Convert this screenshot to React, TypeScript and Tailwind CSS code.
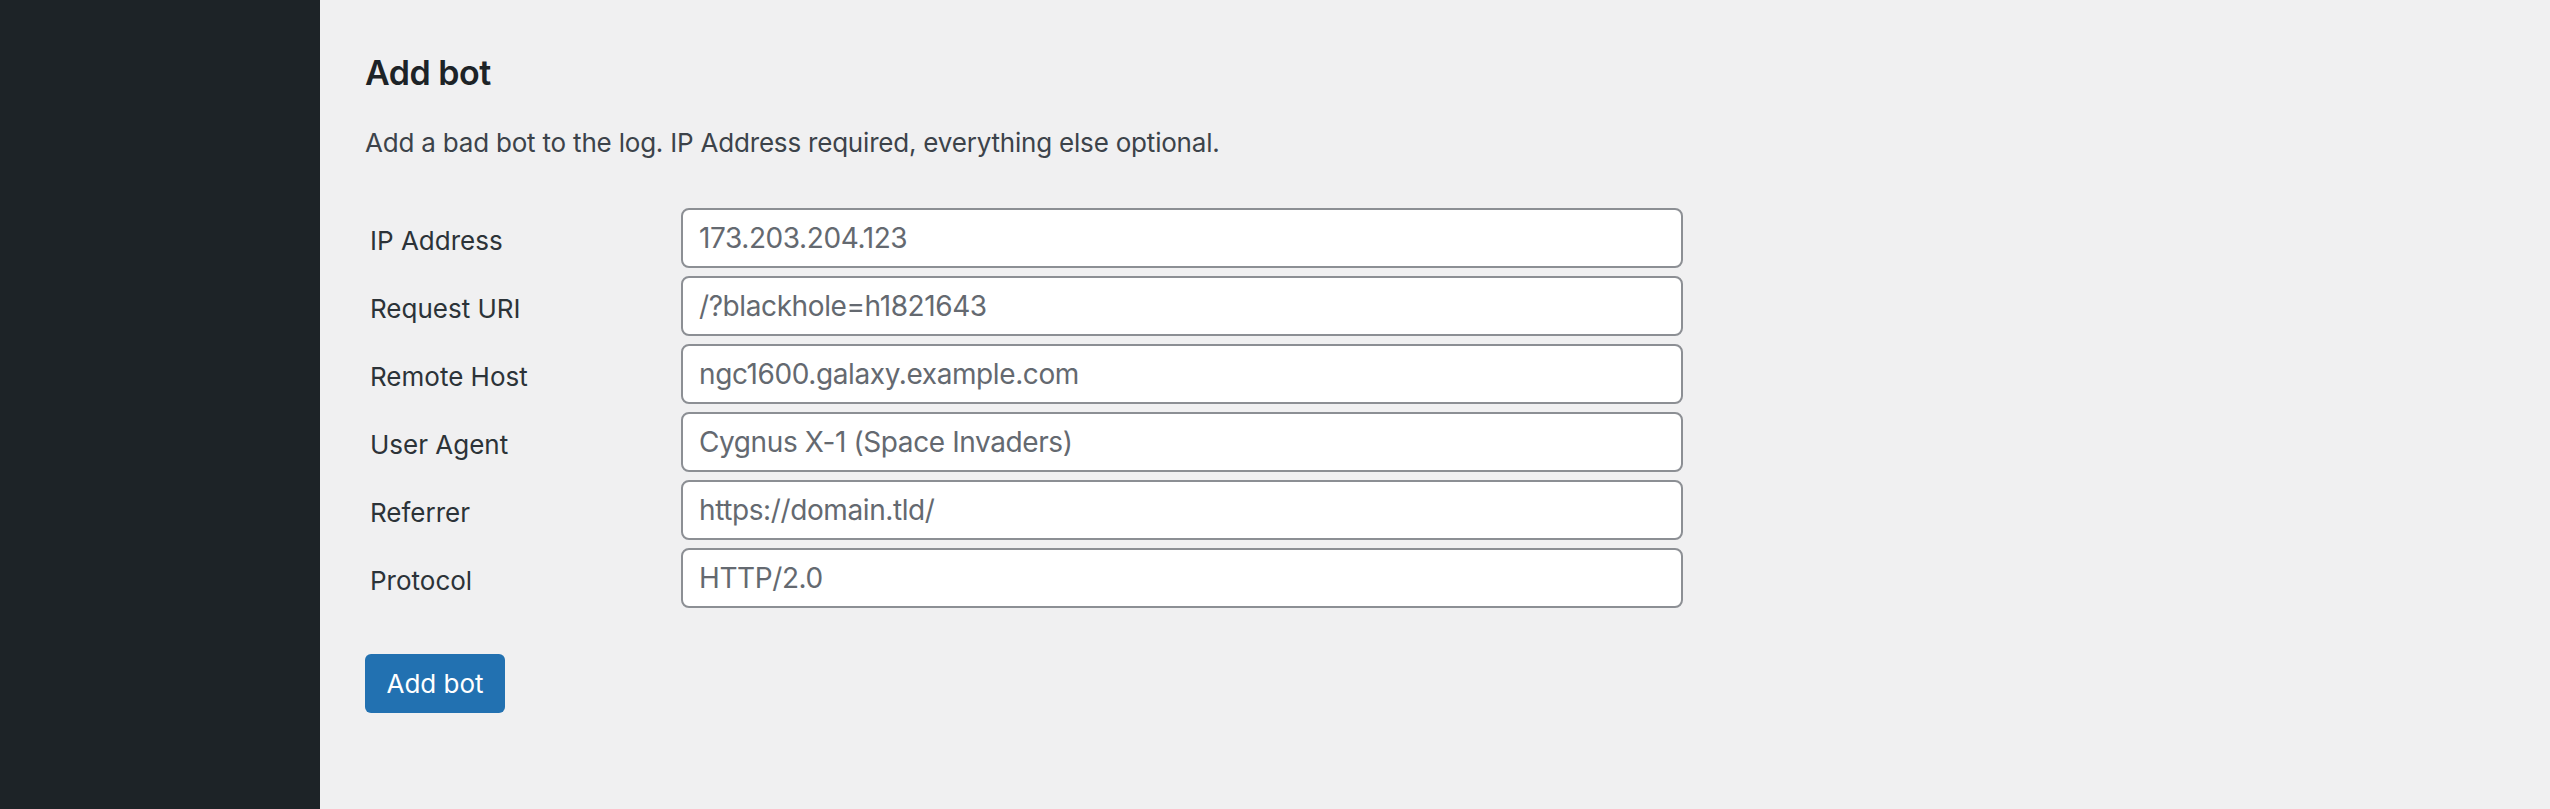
import React from "react";

const rows: [string, string][] = [
  ["IP Address", "173.203.204.123"],
  ["Request URI", "/?blackhole=h1821643"],
  ["Remote Host", "ngc1600.galaxy.example.com"],
  ["User Agent", "Cygnus X-1 (Space Invaders)"],
  ["Referrer", "https://domain.tld/"],
  ["Protocol", "HTTP/2.0"],
];

export default function App() {
  return (
    <div
      className="flex w-[2550px] h-[809px] bg-[#f0f0f1] overflow-hidden"
      style={{ fontFamily: "Inter, 'Noto Sans', sans-serif" }}
    >
      <aside className="w-[320px] shrink-0 bg-[#1d2327]" />
      <main className="flex-1 pl-[45px] pt-[53px]">
        <h2 className="text-[34px] leading-[40px] font-semibold text-[#1d2327] tracking-[-0.5px]">
          Add bot
        </h2>
        <p className="mt-[32px] text-[26px] leading-[36px] text-[#3c434a] tracking-[-0.2px]">
          Add a bad bot to the log. IP Address required, everything else optional.
        </p>
        <div className="mt-[47px] flex flex-col gap-[8px]">
          {rows.map(([label, value]) => (
            <div key={label} className="flex items-center h-[60px]">
              <label className="w-[316px] pl-[5px] pt-[5px] text-[26px] leading-[36px] text-[#2c3338]">
                {label}
              </label>
              <input
                type="text"
                placeholder={value}
                className="w-[1002px] h-[60px] rounded-[8px] border-2 border-[#8c8f94] bg-white px-[16px] text-[28px] tracking-[-0.4px] text-[#2c3338] placeholder:text-[#646970] outline-none"
              />
            </div>
          ))}
        </div>
        <button className="mt-[46px] w-[140px] h-[59px] rounded-[6px] bg-[#2271b1] text-white text-[26px] leading-[59px]">
          Add bot
        </button>
      </main>
    </div>
  );
}
